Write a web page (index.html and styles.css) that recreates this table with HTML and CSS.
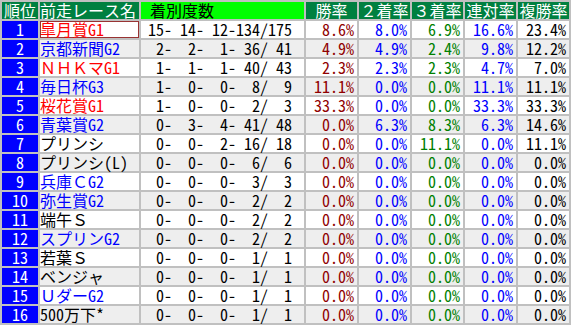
FILE: index.html
```html
<!DOCTYPE html>
<html lang="ja">
<head>
<meta charset="utf-8">
<link rel="stylesheet" href="styles.css">
</head>
<body>
<table class="stats">
<colgroup>
<col class="c-rank"><col class="c-race"><col class="c-rec"><col class="c-pct"><col class="c-pct"><col class="c-pct"><col class="c-pct"><col class="c-pct">
</colgroup>
<thead>
<tr>
<th class="h-dark h-center">順位</th>
<th class="h-dark h-left">前走レース名</th>
<th class="h-lime h-rec">着別度数</th>
<th class="h-dark h-center">勝率</th>
<th class="h-dark h-center">２着率</th>
<th class="h-dark h-center">３着率</th>
<th class="h-dark h-center">連対率</th>
<th class="h-dark h-center">複勝率</th>
</tr>
</thead>
<tbody>
<tr class="odd"><td class="rank">1</td><td class="race g1 picked">皐月賞G1</td><td class="rec">15- 14- 12-134/175</td><td class="win">8.6%</td><td class="p2">8.0%</td><td class="p3">6.9%</td><td class="p2">16.6%</td><td class="pl">23.4%</td></tr>
<tr class="even"><td class="rank">2</td><td class="race gx">京都新聞G2</td><td class="rec"> 2-  2-  1- 36/ 41</td><td class="win">4.9%</td><td class="p2">4.9%</td><td class="p3">2.4%</td><td class="p2">9.8%</td><td class="pl">12.2%</td></tr>
<tr class="odd"><td class="rank">3</td><td class="race g1">ＮＨＫマG1</td><td class="rec"> 1-  1-  1- 40/ 43</td><td class="win">2.3%</td><td class="p2">2.3%</td><td class="p3">2.3%</td><td class="p2">4.7%</td><td class="pl">7.0%</td></tr>
<tr class="even"><td class="rank">4</td><td class="race gx">毎日杯G3</td><td class="rec"> 1-  0-  0-  8/  9</td><td class="win">11.1%</td><td class="p2">0.0%</td><td class="p3">0.0%</td><td class="p2">11.1%</td><td class="pl">11.1%</td></tr>
<tr class="odd"><td class="rank">5</td><td class="race g1">桜花賞G1</td><td class="rec"> 1-  0-  0-  2/  3</td><td class="win">33.3%</td><td class="p2">0.0%</td><td class="p3">0.0%</td><td class="p2">33.3%</td><td class="pl">33.3%</td></tr>
<tr class="even"><td class="rank">6</td><td class="race gx">青葉賞G2</td><td class="rec"> 0-  3-  4- 41/ 48</td><td class="win">0.0%</td><td class="p2">6.3%</td><td class="p3">8.3%</td><td class="p2">6.3%</td><td class="pl">14.6%</td></tr>
<tr class="odd"><td class="rank">7</td><td class="race">プリンシ</td><td class="rec"> 0-  0-  2- 16/ 18</td><td class="win">0.0%</td><td class="p2">0.0%</td><td class="p3">11.1%</td><td class="p2">0.0%</td><td class="pl">11.1%</td></tr>
<tr class="even"><td class="rank">8</td><td class="race">プリンシ(L)</td><td class="rec"> 0-  0-  0-  6/  6</td><td class="win">0.0%</td><td class="p2">0.0%</td><td class="p3">0.0%</td><td class="p2">0.0%</td><td class="pl">0.0%</td></tr>
<tr class="odd"><td class="rank">9</td><td class="race gx">兵庫ＣG2</td><td class="rec"> 0-  0-  0-  3/  3</td><td class="win">0.0%</td><td class="p2">0.0%</td><td class="p3">0.0%</td><td class="p2">0.0%</td><td class="pl">0.0%</td></tr>
<tr class="even"><td class="rank">10</td><td class="race gx">弥生賞G2</td><td class="rec"> 0-  0-  0-  2/  2</td><td class="win">0.0%</td><td class="p2">0.0%</td><td class="p3">0.0%</td><td class="p2">0.0%</td><td class="pl">0.0%</td></tr>
<tr class="odd"><td class="rank">11</td><td class="race">端午Ｓ</td><td class="rec"> 0-  0-  0-  2/  2</td><td class="win">0.0%</td><td class="p2">0.0%</td><td class="p3">0.0%</td><td class="p2">0.0%</td><td class="pl">0.0%</td></tr>
<tr class="even"><td class="rank">12</td><td class="race gx">スプリンG2</td><td class="rec"> 0-  0-  0-  2/  2</td><td class="win">0.0%</td><td class="p2">0.0%</td><td class="p3">0.0%</td><td class="p2">0.0%</td><td class="pl">0.0%</td></tr>
<tr class="odd"><td class="rank">13</td><td class="race">若葉Ｓ</td><td class="rec"> 0-  0-  0-  1/  1</td><td class="win">0.0%</td><td class="p2">0.0%</td><td class="p3">0.0%</td><td class="p2">0.0%</td><td class="pl">0.0%</td></tr>
<tr class="even"><td class="rank">14</td><td class="race">ベンジャ</td><td class="rec"> 0-  0-  0-  1/  1</td><td class="win">0.0%</td><td class="p2">0.0%</td><td class="p3">0.0%</td><td class="p2">0.0%</td><td class="pl">0.0%</td></tr>
<tr class="odd"><td class="rank">15</td><td class="race gx">ＵダーG2</td><td class="rec"> 0-  0-  0-  1/  1</td><td class="win">0.0%</td><td class="p2">0.0%</td><td class="p3">0.0%</td><td class="p2">0.0%</td><td class="pl">0.0%</td></tr>
<tr class="even"><td class="rank">16</td><td class="race">500万下*</td><td class="rec"> 0-  0-  0-  1/  1</td><td class="win">0.0%</td><td class="p2">0.0%</td><td class="p3">0.0%</td><td class="p2">0.0%</td><td class="pl">0.0%</td></tr>
</tbody>
</table>
</body>
</html>
```
FILE: styles.css
```css
html, body {
  margin: 0;
  padding: 0;
  background: #ffffff;
}

.stats {
  border-collapse: separate;
  border-spacing: 2px;
  background: #c0c0c0;
  table-layout: fixed;
  width: 571px;
  font-family: "Noto Sans Mono CJK JP", "Liberation Mono", "Noto Sans CJK JP", monospace;
  font-size: 16px;
  line-height: 17px;
  color: #000000;
}

.c-rank { width: 36px; }
.c-race { width: 99px; }
.c-rec { width: 163px; }
.c-pct { width: 51px; }

.stats th,
.stats td {
  height: 17px;
  padding: 0;
  white-space: nowrap;
  font-weight: normal;
  vertical-align: middle;
}

.h-dark {
  background: #008040;
  color: #ffffff;
}

.h-lime {
  background: #00ff00;
  color: #000000;
}

.h-center { text-align: center; }
.h-left { text-align: left; }
.stats .h-rec { text-align: left; padding-left: 9px; }

.odd td { background: #ffffff; }
.even td { background: #eeeeee; }

.stats td.rank {
  background: #0000ff;
  color: #ffffff;
  text-align: center;
}

.race { text-align: left; }
.g1 { color: #ff0000; }
.gx { color: #0000ff; }
.picked { box-shadow: inset 0 0 0 1px #993333; }

.stats .rec {
  text-align: left;
  white-space: pre;
  padding-left: 7px;
}

.stats .win,
.stats .p2,
.stats .p3,
.stats .pl {
  text-align: right;
  padding-right: 3px;
}

.win { color: #900000; }
.p2 { color: #0000ff; }
.p3 { color: #008000; }
.pl { color: #000000; }
```
